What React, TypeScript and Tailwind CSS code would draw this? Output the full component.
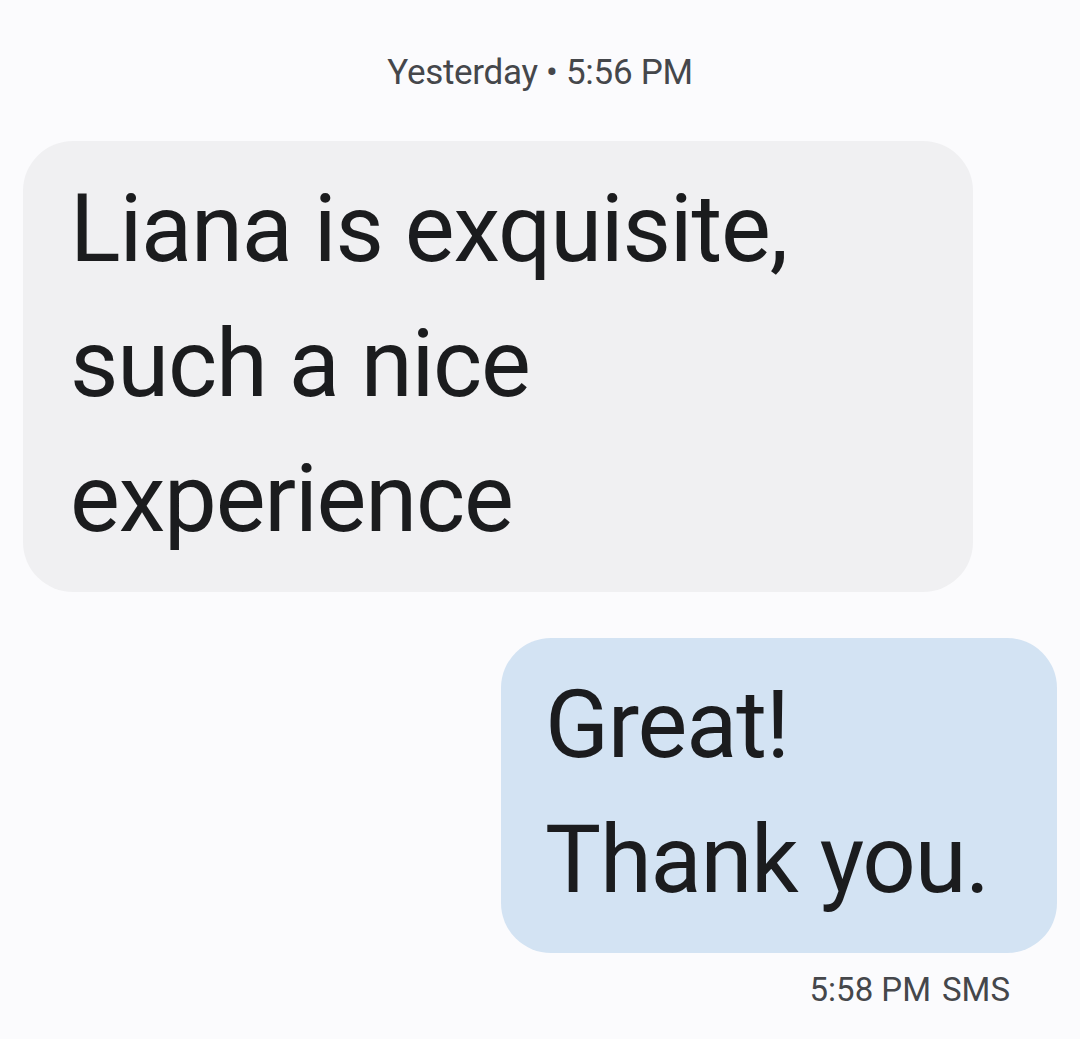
import React from "react";

export default function App() {
  return (
    <div
      className="w-[1080px] h-[1039px] bg-[#fbfbfd] flex flex-col px-[23px] overflow-hidden"
      style={{ fontFamily: "Roboto, 'Noto Sans', sans-serif" }}
    >
      <div className="pt-[53px] h-[141px] text-center text-[35px] leading-[40px] tracking-[-0.3px] text-[#45474b]">
        Yesterday • 5:56 PM
      </div>
      <div className="w-[950px] h-[451px] rounded-[50px] bg-[#f0f0f2] pl-[47px] pt-[21px] text-[94px] leading-[135px] tracking-[-1.2px] text-[#1b1c1e]">
        <div>Liana is exquisite,</div>
        <div>such a nice</div>
        <div>experience</div>
      </div>
      <div className="flex justify-end mt-[46px]">
        <div className="w-[556px] h-[315px] rounded-[50px] bg-[#d3e3f3] pl-[44px] pt-[20px] text-[94px] leading-[135px] tracking-[-1.2px] text-[#1b1c1e]">
          <div>Great!</div>
          <div>Thank you.</div>
        </div>
      </div>
      <div className="flex justify-end items-baseline gap-[11px] pr-[47px] mt-[17px] text-[33px] leading-[40px] text-[#45474b]">
        <span>5:58 PM</span>
        <span>SMS</span>
      </div>
    </div>
  );
}
